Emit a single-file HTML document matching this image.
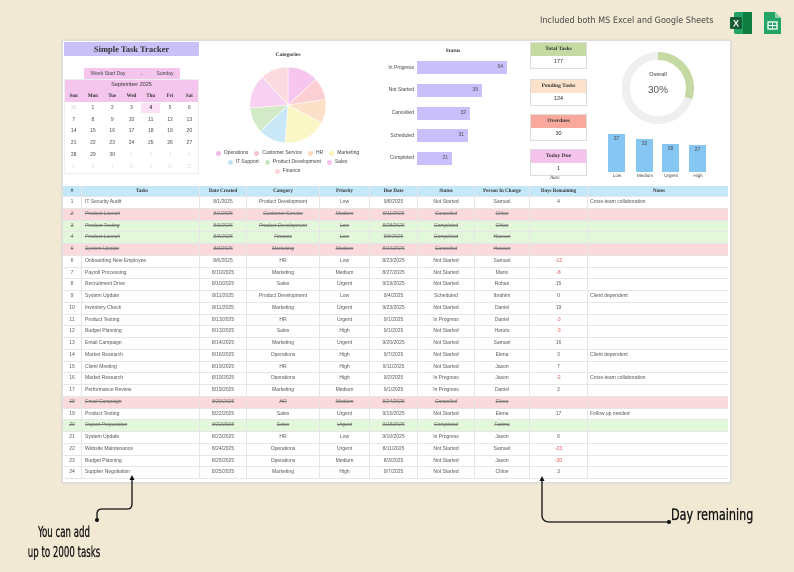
<!DOCTYPE html>
<html><head><meta charset="utf-8"><style>
*{margin:0;padding:0;box-sizing:border-box}
body{width:794px;height:572px;background:#f2e9d5;position:relative;overflow:hidden;font-family:"Liberation Sans",sans-serif;color:#444}
.a{position:absolute}
.panel{left:62px;top:40px;width:669px;height:443px;background:#fff;border:1px solid #ddd;box-shadow:0 0 2px #ccc}
.serif{font-family:"Liberation Serif",serif;font-weight:bold;color:#333}
.cal{left:64px;top:80px;width:135px;font-size:5px}
.cal .r{display:flex;height:11.8px;align-items:center}
.cal .r span{flex:1;text-align:center}
.row{position:absolute;left:63px;width:665px;height:11.75px;display:flex;font-size:5px;align-items:center;border-bottom:1px solid #e6e6e6;color:#555}
.row span{text-align:center;white-space:nowrap;overflow:hidden;border-right:1px solid #e6e6e6;height:100%;line-height:11px}
.row span:nth-child(1){width:19px}
.row span:nth-child(2){width:118px;text-align:left;padding-left:3px}
.row span:nth-child(3){width:47px}
.row span:nth-child(4){width:73px}
.row span:nth-child(5){width:50px}
.row span:nth-child(6){width:48px}
.row span:nth-child(7){width:57px}
.row span:nth-child(8){width:55px}
.row span:nth-child(9){width:58px}
.row span:nth-child(10){width:140px;text-align:left;padding-left:2px;border-right:none}
.hd{background:#c4e8f8;font-family:"Liberation Serif",serif;font-weight:bold;color:#333}
.x{background:#fbdadd;text-decoration:line-through;font-style:italic;color:#777}
.c{background:#e3f8da;text-decoration:line-through;font-style:italic;color:#777}
.neg{color:#e05050}
.card{position:absolute;left:530px;width:57px;border:1px solid #ddd;font-size:5.5px;text-align:center}
.card div:first-child{height:13px;line-height:13px;font-family:"Liberation Serif",serif;font-weight:bold;color:#333}
.card div:last-child{height:12px;line-height:12px;background:#fff;color:#222}
.sb{position:absolute;left:417px;height:13px;background:#c9c0fb;font-size:5px;text-align:right;padding-right:4px;line-height:13px}
.sl{position:absolute;left:360px;width:54px;text-align:right;font-size:5px}
.pb{position:absolute;width:17px;background:#86c6f2;font-size:5px;text-align:center;padding-top:2px}
.pl{position:absolute;top:173px;font-size:4.5px;width:30px;text-align:center}
.leg{font-size:5px;display:inline-flex;align-items:center;margin:0 3px}
.leg i{display:inline-block;width:5px;height:5px;border-radius:50%;margin-right:3px}
.hand{font-family:"DejaVu Sans Condensed","Liberation Sans Narrow",sans-serif;color:#111}
</style></head><body>
<div class="a hand" style="left:540px;top:16px;font-size:9px;color:#444">Included both MS Excel and Google Sheets</div>
<svg class="a" style="left:728px;top:10px" width="58" height="26">
<rect x="6" y="2" width="18" height="22" rx="2" fill="#21a366"/><rect x="15" y="2" width="9" height="22" fill="#107c41"/>
<rect x="2" y="7" width="12" height="12" rx="1" fill="#185c37"/><text x="5" y="16.5" font-size="9" fill="#fff" font-family="Liberation Sans" font-weight="bold">X</text>
<path d="M36 2h11l6 6v16h-17z" fill="#23a566"/><path d="M47 2v6h6z" fill="#8ed1a8"/><rect x="40" y="12" width="9" height="7" fill="none" stroke="#fff" stroke-width="1.3"/><line x1="40" y1="15.5" x2="49" y2="15.5" stroke="#fff" stroke-width="1"/><line x1="44.5" y1="12" x2="44.5" y2="19" stroke="#fff" stroke-width="1"/>
</svg>
<div class="a panel"></div>

<div class="a serif" style="left:64px;top:42px;width:135px;height:14px;background:#c9c0f8;text-align:center;font-size:8.5px;line-height:14px">Simple Task Tracker</div>
<div class="a" style="left:84px;top:68px;width:96px;height:11px;background:#f4c6ee;font-size:5px;display:flex;justify-content:space-around;align-items:center"><span>Week Start Day</span><span>→</span><span>Sunday</span></div>
<div class="a" style="left:64px;top:79px;width:135px;height:23px;background:#f4c6ee"></div>
<div class="a" style="left:64px;top:79px;width:135px;height:95px;border:1px solid #eee"></div>
<div class="a cal">
<div class="r" style="height:10.5px;font-size:5.5px;color:#333"><span>September 2025</span></div>
<div class="r serif" style="height:11.5px;font-size:5px"><span>Sun</span><span>Mon</span><span>Tue</span><span>Wed</span><span>Thu</span><span>Fri</span><span>Sat</span></div>
<div class="r"><span style="color:#ccc">31</span><span>1</span><span>2</span><span>3</span><span style="background:#fbe0f6;font-weight:bold;height:10px;line-height:10px">4</span><span>5</span><span>6</span></div>
<div class="r"><span>7</span><span>8</span><span>9</span><span>10</span><span>11</span><span>12</span><span>13</span></div>
<div class="r"><span>14</span><span>15</span><span>16</span><span>17</span><span>18</span><span>19</span><span>20</span></div>
<div class="r"><span>21</span><span>22</span><span>23</span><span>24</span><span>25</span><span>26</span><span>27</span></div>
<div class="r"><span>28</span><span>29</span><span>30</span><span style="color:#ddd">1</span><span style="color:#ddd">2</span><span style="color:#ddd">3</span><span style="color:#ddd">4</span></div>
<div class="r" style="color:#ddd"><span>5</span><span>6</span><span>7</span><span>8</span><span>9</span><span>10</span><span>11</span></div>
</div>

<div class="a serif" style="left:250px;top:52px;width:76px;text-align:center;font-size:5.5px">Categories</div>
<svg class="a" style="left:246px;top:63px" width="84" height="84" viewBox="-42 -42 84 84">
<g stroke="#fff" stroke-width="0.6">
<path d="M0 0L0 -38A38 38 0 0 1 28 -25.7Z" fill="#f6c6ef"/>
<path d="M0 0L28 -25.7A38 38 0 0 1 37.6 -5.5Z" fill="#fbcfd3"/>
<path d="M0 0L37.6 -5.5A38 38 0 0 1 33.5 18Z" fill="#fde0c8"/>
<path d="M0 0L33.5 18A38 38 0 0 1 -3 37.9Z" fill="#fbf6c5"/>
<path d="M0 0L-3 37.9A38 38 0 0 1 -27.5 26.2Z" fill="#c8e8f7"/>
<path d="M0 0L-27.5 26.2A38 38 0 0 1 -38 3Z" fill="#d3eac9"/>
<path d="M0 0L-38 3A38 38 0 0 1 -25.5 -28.2Z" fill="#f8d0f1"/>
<path d="M0 0L-25.5 -28.2A38 38 0 0 1 0 -38Z" fill="#fcdbe0"/>
</g></svg>
<div class="a" style="left:200px;top:148px;width:175px;text-align:center;line-height:7px">
<span class="leg"><i style="background:#f2b9ea"></i>Operations</span><span class="leg"><i style="background:#f9c5cb"></i>Customer Service</span><span class="leg"><i style="background:#fcd9bd"></i>HR</span><span class="leg"><i style="background:#faf2b3"></i>Marketing</span><br>
<span class="leg"><i style="background:#bfe3f5"></i>IT Support</span><span class="leg"><i style="background:#cbe6bf"></i>Product Development</span><span class="leg"><i style="background:#f5c3ee"></i>Sales</span><br>
<span class="leg"><i style="background:#fbd3d8"></i>Finance</span></div>

<div class="a serif" style="left:430px;top:48px;width:46px;text-align:center;font-size:5.5px">Status</div>
<div class="sl" style="top:65px">In Progress</div><div class="sb" style="top:61px;width:90px">54</div>
<div class="sl" style="top:87px">Not Started</div><div class="sb" style="top:84px;width:65px">39</div>
<div class="sl" style="top:110px">Cancelled</div><div class="sb" style="top:107px;width:53px">32</div>
<div class="sl" style="top:133px">Scheduled</div><div class="sb" style="top:129px;width:51px">31</div>
<div class="sl" style="top:155px">Completed</div><div class="sb" style="top:152px;width:35px">21</div>

<div class="card" style="top:42px"><div style="background:#c5d9a3">Total Tasks</div><div>177</div></div>
<div class="card" style="top:79px"><div style="background:#fde2cb">Pending Tasks</div><div>124</div></div>
<div class="card" style="top:114px"><div style="background:#f8a99c">Overdues</div><div>30</div></div>
<div class="card" style="top:149px"><div style="background:#f4c4ec">Today Due</div><div>1</div></div>
<div class="a" style="left:550px;top:176px;font-size:5px;font-style:italic;font-family:'Liberation Serif',serif">Auto</div>

<svg class="a" style="left:620px;top:50px" width="76" height="76" viewBox="-38 -38 76 76">
<circle r="32" fill="none" stroke="#efefef" stroke-width="8"/>
<path d="M0 -32A32 32 0 0 1 30.4 9.9" fill="none" stroke="#c5d9a3" stroke-width="8"/>
<text x="0" y="-12" text-anchor="middle" font-size="5.5" fill="#333" font-family="Liberation Sans">Overall</text>
<text x="0" y="5" text-anchor="middle" font-size="10" fill="#555" font-family="Liberation Sans">30%</text>
</svg>
<div class="pb" style="left:608px;top:134px;height:38px">37</div>
<div class="pb" style="left:636px;top:139px;height:33px">32</div>
<div class="pb" style="left:662px;top:144px;height:28px">28</div>
<div class="pb" style="left:689px;top:145px;height:27px">27</div>
<div class="pl" style="left:602px">Low</div><div class="pl" style="left:630px">Medium</div><div class="pl" style="left:656px">Urgent</div><div class="pl" style="left:683px">High</div>

<div class="row hd" style="top:186px;height:11px"><span>#</span><span style="text-align:center">Tasks</span><span>Date Created</span><span>Category</span><span>Priority</span><span>Due Date</span><span>Status</span><span>Person In Charge</span><span>Days Remaining</span><span style="text-align:center">Notes</span></div>
<div class="row" style="top:197px"><span>1</span><span>IT Security Audit</span><span>8/1/2025</span><span>Product Development</span><span>Low</span><span>9/8/2025</span><span>Not Started</span><span>Samuel</span><span>4</span><span>Cross-team collaboration</span></div>
<div class="row x" style="top:208.75px"><span>2</span><span>Product Launch</span><span>8/1/2025</span><span>Customer Service</span><span>Medium</span><span>8/11/2025</span><span>Cancelled</span><span>Chloe</span><span></span><span></span></div>
<div class="row c" style="top:220.5px"><span>3</span><span>Product Testing</span><span>8/3/2025</span><span>Product Development</span><span>Low</span><span>8/28/2025</span><span>Completed</span><span>Chloe</span><span></span><span></span></div>
<div class="row c" style="top:232.25px"><span>4</span><span>Product Launch</span><span>8/3/2025</span><span>Finance</span><span>Low</span><span>8/8/2025</span><span>Completed</span><span>Hassan</span><span></span><span></span></div>
<div class="row x" style="top:244px"><span>5</span><span>System Update</span><span>8/3/2025</span><span>Marketing</span><span>Medium</span><span>8/16/2025</span><span>Cancelled</span><span>Hassan</span><span></span><span></span></div>
<div class="row" style="top:255.75px"><span>6</span><span>Onboarding New Employee</span><span>8/6/2025</span><span>HR</span><span>Low</span><span>8/23/2025</span><span>Not Started</span><span>Samuel</span><span class="neg">-12</span><span></span></div>
<div class="row" style="top:267.5px"><span>7</span><span>Payroll Processing</span><span>8/10/2025</span><span>Marketing</span><span>Medium</span><span>8/27/2025</span><span>Not Started</span><span>Mario</span><span class="neg">-8</span><span></span></div>
<div class="row" style="top:279.25px"><span>8</span><span>Recruitment Drive</span><span>8/10/2025</span><span>Sales</span><span>Urgent</span><span>9/19/2025</span><span>Not Started</span><span>Rohan</span><span>15</span><span></span></div>
<div class="row" style="top:291px"><span>9</span><span>System Update</span><span>8/11/2025</span><span>Product Development</span><span>Low</span><span>9/4/2025</span><span>Scheduled</span><span>Ibrahim</span><span>0</span><span>Client dependent</span></div>
<div class="row" style="top:302.75px"><span>10</span><span>Inventory Check</span><span>8/11/2025</span><span>Marketing</span><span>Urgent</span><span>9/23/2025</span><span>Not Started</span><span>Daniel</span><span>19</span><span></span></div>
<div class="row" style="top:314.5px"><span>11</span><span>Product Testing</span><span>8/13/2025</span><span>HR</span><span>Urgent</span><span>9/1/2025</span><span>In Progress</span><span>Daniel</span><span class="neg">-3</span><span></span></div>
<div class="row" style="top:326.25px"><span>12</span><span>Budget Planning</span><span>8/13/2025</span><span>Sales</span><span>High</span><span>9/1/2025</span><span>Not Started</span><span>Haruto</span><span class="neg">-3</span><span></span></div>
<div class="row" style="top:338px"><span>13</span><span>Email Campaign</span><span>8/14/2025</span><span>Marketing</span><span>Urgent</span><span>9/20/2025</span><span>Not Started</span><span>Samuel</span><span>16</span><span></span></div>
<div class="row" style="top:349.75px"><span>14</span><span>Market Research</span><span>8/16/2025</span><span>Operations</span><span>High</span><span>9/7/2025</span><span>Not Started</span><span>Elena</span><span>3</span><span>Client dependent</span></div>
<div class="row" style="top:361.5px"><span>15</span><span>Client Meeting</span><span>8/19/2025</span><span>HR</span><span>High</span><span>9/11/2025</span><span>Not Started</span><span>Jason</span><span>7</span><span></span></div>
<div class="row" style="top:373.25px"><span>16</span><span>Market Research</span><span>8/19/2025</span><span>Operations</span><span>High</span><span>9/2/2025</span><span>In Progress</span><span>Jason</span><span class="neg">-2</span><span>Cross-team collaboration</span></div>
<div class="row" style="top:385px"><span>17</span><span>Performance Review</span><span>8/19/2025</span><span>Marketing</span><span>Medium</span><span>9/1/2025</span><span>In Progress</span><span>Daniel</span><span>2</span><span></span></div>
<div class="row x" style="top:396.75px"><span>18</span><span>Email Campaign</span><span>8/20/2025</span><span>HR</span><span>Medium</span><span>8/24/2025</span><span>Cancelled</span><span>Elena</span><span></span><span></span></div>
<div class="row" style="top:408.5px"><span>19</span><span>Product Testing</span><span>8/22/2025</span><span>Sales</span><span>Urgent</span><span>9/15/2025</span><span>Not Started</span><span>Elena</span><span>17</span><span>Follow up needed</span></div>
<div class="row c" style="top:420.25px"><span>20</span><span>Report Preparation</span><span>8/22/2025</span><span>Sales</span><span>Urgent</span><span>9/18/2025</span><span>Completed</span><span>Fatima</span><span></span><span></span></div>
<div class="row" style="top:432px"><span>21</span><span>System Update</span><span>8/23/2025</span><span>HR</span><span>Low</span><span>9/10/2025</span><span>In Progress</span><span>Jason</span><span>6</span><span></span></div>
<div class="row" style="top:443.75px"><span>22</span><span>Website Maintenance</span><span>8/24/2025</span><span>Operations</span><span>Urgent</span><span>8/11/2025</span><span>Not Started</span><span>Samuel</span><span class="neg">-23</span><span></span></div>
<div class="row" style="top:455.5px"><span>23</span><span>Budget Planning</span><span>8/25/2025</span><span>Operations</span><span>Medium</span><span>8/3/2025</span><span>Not Started</span><span>Jason</span><span class="neg">-30</span><span></span></div>
<div class="row" style="top:467.25px"><span>24</span><span>Supplier Negotiation</span><span>8/25/2025</span><span>Marketing</span><span>High</span><span>9/7/2025</span><span>Not Started</span><span>Chloe</span><span>3</span><span></span></div>

<svg class="a" style="left:0;top:470px" width="794" height="80">
<g fill="none" stroke="#111" stroke-width="1.3">
<path d="M132 9V34Q132 39 127 39H102Q97 39 97 44V49"/>
<path d="M542 10V45Q542 52 550 52H668"/>
</g>
<path d="M132 5l-2.5 5h5z" fill="#111"/><path d="M542 6l-2.5 5h5z" fill="#111"/>
<circle cx="97" cy="50" r="2" fill="#111"/><circle cx="669" cy="52" r="2" fill="#111"/>
</svg>
<div class="a hand" style="left:4px;top:522px;width:120px;text-align:center;font-size:15px;line-height:20px;transform:scaleX(0.64);transform-origin:60px 0;-webkit-text-stroke:0.3px #111">You can add<br>up to 2000 tasks</div>
<div class="a hand" style="left:671px;top:505px;font-size:16px;transform:scaleX(0.78);transform-origin:0 0;-webkit-text-stroke:0.3px #111">Day remaining</div>
</body></html>
